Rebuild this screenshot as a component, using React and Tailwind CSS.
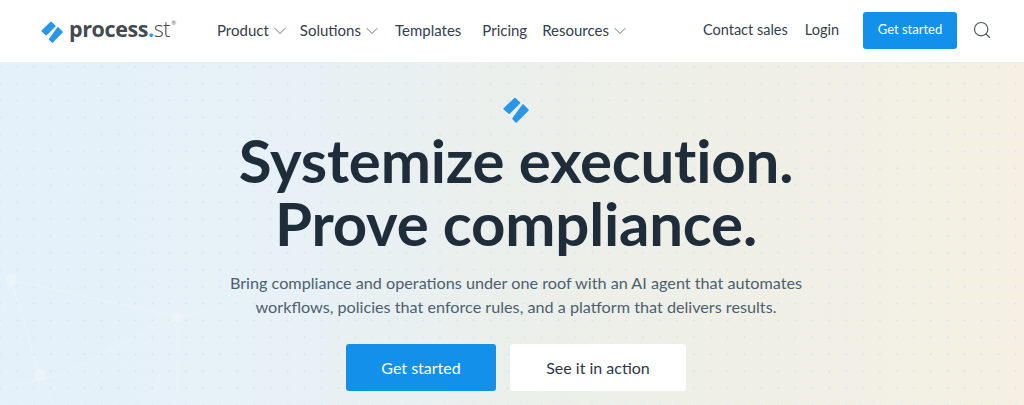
import { ChevronDown, Search } from "lucide-react"

function LogoMark({ className }) {
  return (
    <svg viewBox="0 0 26 26" className={className} fill="#2a96e8" stroke="#2a96e8" strokeWidth="1.6" strokeLinejoin="round">
      <path d="M11.8 1.6 L16.6 5.8 L6.2 16.2 L1.2 11.8 z" />
      <path d="M20 8 L25 13 L13.2 25 L10 21.6 z" />
    </svg>
  )
}

function NavItem({ label, arrow, className }) {
  return (
    <a className={`flex items-center whitespace-nowrap ${className}`}>
      {label}
      {arrow && <ChevronDown className="ml-[1.5px] w-[20px] h-[20px] mt-[2px] text-[#5a6672]" strokeWidth={1.1} />}
    </a>
  )
}

function Network() {
  return (
    <svg className="absolute left-0 top-0 w-[240px] h-[342px] pointer-events-none" viewBox="0 0 240 342" fill="none">
      <g stroke="#ffffff" strokeOpacity="0.18" strokeWidth="1">
        <path d="M11 217 L40 312 L52 342" />
        <path d="M11 217 L0 262" />
        <path d="M11 217 L178 254 L240 240" />
        <path d="M178 254 L176 342" />
        <path d="M178 254 L60 312 L0 325" />
        <path d="M178 254 L70 342" />
        <path d="M178 254 L150 342" />
      </g>
      <circle cx="11" cy="217" r="6" fill="#ffffff" fillOpacity="0.22" />
      <circle cx="178" cy="254" r="6" fill="#ffffff" fillOpacity="0.22" />
      <circle cx="40" cy="312" r="6" fill="#ffffff" fillOpacity="0.22" />
    </svg>
  )
}

export default function App() {
  return (
    <div className="w-[1024px] h-[405px] overflow-hidden font-['Lato',sans-serif] text-[#26323d]">
      <header className="h-[63px] bg-white flex items-center pl-[41px] pb-[2px] text-[15px] text-[#34404c] border-b border-[#ededed]">
        <div className="flex items-center w-[176px]">
          <LogoMark className="w-[22px] h-[22px] mt-[3px]" />
          <span className="ml-[6px] font-['Open_Sans',sans-serif] text-[21.5px] tracking-[-0.4px] font-bold text-[#444a50] leading-none pb-[2px]">
            process<span className="text-[#2a96e8]">.</span><span className="font-light">st</span>
          </span>
          <span className="text-[6px] text-[#666] self-start ml-[1px]">®</span>
        </div>
        <nav className="flex items-center">
          <NavItem label="Product" arrow />
          <NavItem label="Solutions" arrow className="ml-[9.5px]" />
          <NavItem label="Templates" className="ml-[12.5px]" />
          <NavItem label="Pricing" className="ml-[21px]" />
          <NavItem label="Resources" arrow className="ml-[15px]" />
        </nav>
        <div className="ml-auto flex items-center pr-[32px] text-[14.5px]">
          <a className="whitespace-nowrap">Contact sales</a>
          <a className="ml-[17px]">Login</a>
          <button className="ml-[24px] w-[94px] h-[37px] rounded-[3px] bg-[#1390ea] text-white text-[13px]">Get started</button>
          <Search className="ml-[15px] w-[20px] h-[20px] text-[#4a5560]" strokeWidth={1.4} />
        </div>
      </header>
      <main className="relative h-[342px] bg-[radial-gradient(circle_at_center,#d5e5f1_0.8px,transparent_1.2px),linear-gradient(90deg,#e4f1fa_0%,#e7f1f8_25%,#ecefe9_55%,#f5f0e3_100%)] [background-size:16.93px_16.93px,100%_100%] [background-position:-8.46px_-4.8px,0_0] flex flex-col items-center pt-[34px] pl-[8px]">
        <Network />
        <LogoMark className="relative w-[26px] h-[26px]" />
        <h1 className="relative mt-[6px] text-center text-[60px] leading-[63px] font-bold text-[#1f2d3a] tracking-[-0.2px]">
          Systemize execution.<br />Prove compliance.
        </h1>
        <p className="relative mt-[16px] text-center text-[16.2px] leading-[24px] text-[#4c5f70]">
          Bring compliance and operations under one roof with an AI agent that automates<br />
          workflows, policies that enforce rules, and a platform that delivers results.
        </p>
        <div className="relative mt-[25px] flex gap-[14px]">
          <button className="w-[150px] h-[47px] rounded-[3px] bg-[#1390ea] text-white text-[16px]">Get started</button>
          <button className="w-[176px] h-[47px] rounded-[3px] bg-white text-[#2c3844] text-[16px]">See it in action</button>
        </div>
      </main>
    </div>
  )
}
